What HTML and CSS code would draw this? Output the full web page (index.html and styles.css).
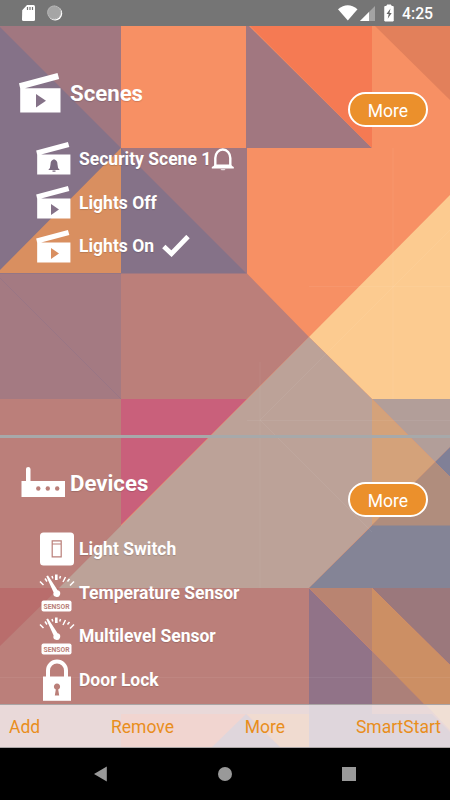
FILE: index.html
```
<!DOCTYPE html>
<html>
<head>
<meta charset="utf-8">
<meta name="viewport" content="width=device-width,initial-scale=1.0">
<title>Scenes and Devices</title>
<link rel="stylesheet" href="styles.css">
</head>
<body>
	<!-- icons used more than once -->
	<svg class="defs">
		<symbol id="clap" viewBox="0 0 42 40">
			<path d="M0 10.300L38.500 0l1.700 6L6 15.300h35.500V39.500H1.200V15.500z"/>
		</symbol>
		<symbol id="sensor" viewBox="0 0 36 38">
			<path d="M1 7.500l3.500 3.500M6 4.500l2 3M13 2l.8 2.500M21.500 2l-.8 2.500M26.500 3l-2.500 5M30.500 5l-2 2.500M35 7.500L31 11.500" fill="none" stroke="#fff" stroke-width="1.500"/>
			<path d="M16 .5h2.600v5.500H16zM7.300 2.300l1.700-.8 9.600 14.800a3.400 3.400 0 1 1-4 2.200z"/>
			<rect x="2.500" y="26.500" width="30" height="11" rx="2"/>
		</symbol>
	</svg>

	<header class="status">
		<svg width="64" height="26">
			<path d="M22.200 10.200L27 5h6.500q1.500 0 1.500 1.500v13q0 1.500-1.500 1.500h-10q-1.500 0-1.500-1.500z" fill="#fff"/>
			<path d="M27.500 7v3M30 7v3M32.500 7v3" stroke="#757575" stroke-width="1.200"/>
			<circle cx="55.200" cy="13.500" r="7" fill="#fff"/>
			<circle cx="54.200" cy="12.500" r="7" fill="#a5a5a5"/>
			<circle cx="54.200" cy="12.500" r="6.500" fill="none" stroke="#c4c4c4" stroke-dasharray="1 1"/>
		</svg>
		<div class="status-right">
			<svg width="60" height="26">
				<path d="M0 9.300Q9.800 1 19.500 9.300L9.800 20.500z" fill="#fff"/>
				<path d="M22 21L37 6v15z" fill="#a3a3a3"/>
				<path d="M22 21l9-9v9z" fill="#fff"/>
				<path d="M49 6.500V5h4v1.500h2.200V21h-8.400V6.500z" fill="#fff" stroke="#fff" stroke-linejoin="round"/>
				<path d="M52.500 8.500l-4 5.500h2.200l-1 4.700 4-5.700h-2.200z" fill="#666"/>
			</svg>
			<span class="clock">4:25</span>
		</div>
	</header>

	<main class="page">
		<!-- geometric wallpaper -->
		<svg class="wallpaper" viewBox="0 26 450 722" width="450" height="722">
			<path fill="#f79064" d="M0 26h450v722H0z"/>
			<path fill="#a17780" d="M0 26h121v122H0zM247 26h2l123 122H246V26zM121 148h126v126H121z"/>
			<path fill="#857288" d="M0 27l121 121 126 126H0z"/>
			<path fill="#d98f60" d="M121 148v125H0v-3z"/>
			<path fill="#f57a53" d="M250 26h122v122z"/>
			<path fill="#e2805b" d="M375 26h75v74z"/>
			<path fill="#a47a82" d="M0 273.500h121V399H0z"/>
			<path fill="#bb7f7a" d="M121 273.500h126l62 63.500L247 399H121zM0 399h121v189h188v160H0z"/>
			<path fill="#fccb90" d="M450 195v204h-78l-63-62z"/>
			<path fill="#c9607b" d="M121 399h126L121 525z"/>
			<path fill="#bca298" d="M309 337l63 62v126l-63 63H59z"/>
			<path fill="#b96d6c" d="M0 588h59L0 646z"/>
			<path fill="#b29e99" d="M372 399h78v48l-15 15z"/>
			<path fill="#d4a27a" d="M372 399l63 63-63 63z"/>
			<path fill="#808097" d="M435 462l15-15v30z"/>
			<path fill="#b08d7d" d="M435 462l15 15v49h-78v-1z"/>
			<path fill="#848496" d="M372 525.500h78V588H309z"/>
			<path fill="#917388" d="M309 588l63 63v97h-63z"/>
			<path fill="#b98471" d="M309 588h63v63z"/>
			<path fill="#9b787c" d="M372 588h78v77z"/>
			<path fill="#cc8f64" d="M372 588l78 77v66l-78-80z"/>
			<path fill="#ac8079" d="M372 651l53 54h-53z"/>
			<g fill="none" stroke="#fff" stroke-opacity=".06">
				<path d="M393 148v251M309 286.500h141M260 362v226M247 420.500h203M260 420L450 230M260 420l112 112M0 677.500h450"/>
			</g>
			<path stroke="#8b7189" stroke-opacity=".4" d="M0 278l121 121"/>
			<!-- part under the toolbar -->
			<path fill="#e9d9d9" d="M0 704h450v44H0z"/>
			<path fill="#f1d5d0" d="M121 714h188v34H121z"/>
			<path fill="#f0dbd0" d="M247 714h62v34h-28z"/>
			<path fill="#dfd6dc" d="M246 714l35 34h-70zM309 704h63v44h-63zM372 714h60l18 18v16h-78z"/>
			<path fill="#f0dfd4" d="M425 704h25v26z"/>
		</svg>

		<section class="scenes">
			<div class="head">
				<svg class="head-icon" width="46" height="40" viewBox="0 0 46 40">
					<use href="#clap" x="0" y="0" width="42" height="40"/>
					<path d="M17 21v13.500l10-6.700z" fill="#857288"/>
				</svg>
				<h2>Scenes</h2>
				<a class="more">More</a>
			</div>
			<ul>
				<li>
					<svg class="icon" width="36" height="33" viewBox="0 0 36 33">
						<use href="#clap" width="35" height="33"/>
						<path d="M12.300 28q2.200-1.500 2.200-5.500 0-4.200 3.500-5.200 3.500 1 3.500 5.200 0 4 2.200 5.500zm4.200.6h3v1.200h-3z" fill="#7b6b80"/>
					</svg>
					<span>Security Scene 1</span>
					<svg class="bell" width="24" height="24" viewBox="0 0 24 24">
						<path d="M4.300 19.500V11a7.500 8.500 0 0 1 15 0v8.500" fill="none" stroke="#fff" stroke-width="2.400"/>
						<path d="M.8 20q2-1 3-2.500h16q1 1.500 3 2.500v1.500H.8z"/>
						<path d="M9.500 22h5l-1 1.200h-3z" opacity=".7"/>
					</svg>
				</li>
				<li>
					<svg class="icon" width="36" height="33" viewBox="0 0 36 33">
						<use href="#clap" width="35" height="33"/>
						<path d="M15 18v11l8-5.500z" fill="#857288"/>
					</svg>
					<span>Lights Off</span>
				</li>
				<li>
					<svg class="icon" width="36" height="33" viewBox="0 0 36 33">
						<use href="#clap" width="35" height="33"/>
						<path d="M15 18v11l8-5.500z" fill="#d98f60"/>
					</svg>
					<span>Lights On</span>
					<svg class="tick" width="28" height="22" viewBox="0 0 28 22">
						<path d="M1.800 11.500l7.700 7.200L26 1.500" fill="none" stroke="#fff" stroke-width="4.800"/>
					</svg>
				</li>
			</ul>
		</section>

		<section class="devices">
			<div class="head">
				<svg class="head-icon" width="46" height="40" viewBox="0 0 46 40">
					<path d="M1.500 20H6V8q0-2 2.200-2t2.300 2v12H45v16H1.500z"/>
					<g fill="#ba7f79"><circle cx="18.300" cy="27.500" r="2.200"/><circle cx="27.800" cy="27.500" r="2.200"/><circle cx="37.200" cy="27.500" r="2.200"/></g>
				</svg>
				<h2>Devices</h2>
				<a class="more">More</a>
			</div>
			<ul>
				<li>
					<svg class="icon-d" width="36" height="34" viewBox="0 0 36 34">
						<rect x="1" y=".5" width="34" height="33" rx="3.500"/>
						<path d="M13.200 8.800h9v16h-9zM13.200 12h9" fill="none" stroke="#ba7f79" stroke-width="1.200"/>
					</svg>
					<span>Light Switch</span>
				</li>
				<li>
					<svg class="icon-d" width="36" height="38">
						<use href="#sensor"/>
						<text x="17.500" y="34.500" textLength="26" class="sensor-text">SENSOR</text>
					</svg>
					<span>Temperature Sensor</span>
				</li>
				<li>
					<svg class="icon-d" width="36" height="38">
						<use href="#sensor"/>
						<text x="17.500" y="34.500" textLength="26" class="sensor-text">SENSOR</text>
					</svg>
					<span>Multilevel Sensor</span>
				</li>
				<li>
					<svg class="icon-d" width="36" height="42" viewBox="0 0 36 42">
						<path d="M9 18v-6.500a9 9 0 0 1 18 0V18" fill="none" stroke="#fff" stroke-width="4"/>
						<path d="M4 17.500h28v24.300H4z"/>
						<path d="M16.800 30.500a3.100 3.100 0 1 1 2.400 0l1 6h-4.400z" fill="#ba7f79"/>
					</svg>
					<span>Door Lock</span>
				</li>
			</ul>
		</section>

		<nav class="toolbar">
			<a>Add</a>
			<a>Remove</a>
			<a>More</a>
			<a>SmartStart</a>
		</nav>
	</main>

	<footer class="keys">
		<svg width="14" height="16"><path d="M0 8L12.800.500v15z"/></svg>
		<svg width="14" height="16"><circle cx="7" cy="8" r="7"/></svg>
		<svg width="14" height="16"><path d="M0 1h14v14H0z"/></svg>
	</footer>
</body>
</html>
```
FILE: styles.css
```
* { box-sizing: border-box; }
body { margin: 0; width: 450px; height: 800px; overflow: hidden; font-family: Roboto, "Liberation Sans", sans-serif; color: #fff; background: #000; }
ul { list-style: none; margin: 0; padding: 0; }
h2 { margin: 0; font-size: 22.2px; line-height: 26px; font-weight: 700; text-shadow: 0 1px 1px rgba(0,0,0,.15); }
svg { display: block; flex: none; fill: #fff; }
.defs { width: 0; height: 0; position: absolute; }

.status { height: 26px; background: #757575; display: flex; justify-content: space-between; }
.status-right { display: flex; width: 112px; }
.clock { font-size: 15.8px; line-height: 28px; font-weight: 500; margin-left: 4px; }

.page { position: relative; height: 722px; display: flex; flex-direction: column; }
.wallpaper { position: absolute; left: 0; top: 0; z-index: -1; }

.scenes { height: 412px; padding-top: 46px; border-bottom: 3px solid #a7a9aa; }
.devices { height: 266px; padding-top: 24px; overflow: hidden; }
.head { height: 65px; display: flex; padding: 0 22px 0 19px; align-items: flex-start; }
.scenes .head-icon { margin-top: 1px; }
.devices .head-icon { margin: -1px 0 0 1px; }
.head h2 { margin: 8px 0 0 5px; }
.devices .head h2 { margin-left: 4px; }
.more { margin: 20px 0 0 auto; width: 80px; height: 35px; border: 2px solid #fff; border-radius: 18px; background: #eb902c; text-align: center; font-size: 17.5px; line-height: 34px; }

li { height: 43.7px; display: flex; align-items: center; padding-left: 36px; font-size: 17.5px; font-weight: 700; white-space: nowrap; text-shadow: 0 1px 1px rgba(0,0,0,.15); }
.icon { margin-right: 7px; }
.icon-d { margin: 0 4px 0 3px; }
.bell { margin-left: 0; }
.tick { margin-left: 8px; }
.sensor-text { font-size: 6.8px; font-weight: 700; fill: #ba7f79; text-anchor: middle; text-shadow: none; }

.toolbar { height: 44px; display: flex; justify-content: space-between; align-items: center; padding: 2px 9px 0; border-top: 1px solid #aaa5a5; border-bottom: 1px solid #aaa5a5; color: #e98e1c; font-size: 17.5px; }

.keys { height: 52px; display: flex; justify-content: space-between; align-items: center; padding: 0 94px; }
.keys svg { fill: #999; }
```
